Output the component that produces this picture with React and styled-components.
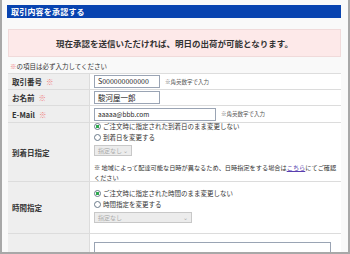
import styled, { createGlobalStyle } from "styled-components";

const Global = createGlobalStyle`
  html, body { margin: 0; padding: 0; }
  body {
    width: 350px;
    height: 254px;
    overflow: hidden;
    font-family: "Noto Sans CJK JP", "Noto Sans", sans-serif;
    color: #333;
  }
`;

const Frame = styled.div`
  box-sizing: border-box;
  width: 350px;
  height: 254px;
  overflow: hidden;
  border: 2px solid #a8a8a8;
  border-top: none;
  background: #f9f9f9;
  padding: 5px 7px 0 5px;
`;

const Header = styled.div`
  height: 13px;
  background: #0843b0;
  color: #fff;
  font-size: 8px;
  font-weight: 700;
  line-height: 13px;
  padding-left: 4px;
  letter-spacing: 0.2px;
`;

const Notice = styled.div`
  margin: 11px 0 0 1px;
  height: 26px;
  background: #fde9e9;
  border: 1px solid #f0dada;
  display: flex;
  align-items: center;
  justify-content: center;
  font-size: 8.5px;
  font-weight: 700;
  color: #333;
`;

const Required = styled.p`
  margin: 4px 0 0 3px;
  font-size: 6.5px;
  line-height: 10px;
`;

const Mark = styled.span`
  color: #f08080;
  margin-left: ${(p) => (p.$gap ? "4px" : "0")};
`;

const Table = styled.div`
  margin: 2px 0 0 1px;
  display: grid;
  grid-template-columns: 82px 1fr;
  border-top: 1px solid #ddd;
  background: #fff;
`;

const Label = styled.div`
  background: #eeeeee;
  border-bottom: 1px solid #dcdcdc;
  border-right: 1px solid #dcdcdc;
  display: flex;
  align-items: center;
  padding-left: 4px;
  height: ${(p) => p.$h}px;
  font-size: 7.5px;
  font-weight: 700;
  color: #333;
  box-sizing: border-box;
`;

const Cell = styled.div`
  border-bottom: 1px solid #dcdcdc;
  display: flex;
  flex-direction: ${(p) => (p.$col ? "column" : "row")};
  align-items: ${(p) => (p.$col ? "flex-start" : "center")};
  justify-content: ${(p) => (p.$col ? "center" : "flex-start")};
  padding-left: 4px;
  height: ${(p) => p.$h}px;
  box-sizing: border-box;
`;

const Input = styled.div`
  box-sizing: border-box;
  width: ${(p) => p.$w}px;
  height: 13px;
  border: 1px solid #9aa4b4;
  background: #fff;
  font-size: ${(p) => p.$fs || 7}px;
  line-height: 11px;
  padding-left: 3px;
  color: #222;
  white-space: nowrap;
  overflow: hidden;
`;

const Hint = styled.span`
  font-size: 5.5px;
  color: #555;
  margin-left: 5px;
`;

const Radio = styled.label`
  display: flex;
  align-items: center;
  font-size: 6.5px;
  line-height: 11px;
  color: #333;
  &::before {
    content: "";
    box-sizing: border-box;
    width: 7px;
    height: 7px;
    border-radius: 50%;
    border: 1px solid #6a7a8a;
    margin-right: 2px;
    background: ${(p) =>
      p.$on ? "radial-gradient(circle, #2fa84f 0 1.6px, #fff 2px)" : "#fff"};
  }
`;

const Select = styled.div`
  box-sizing: border-box;
  width: ${(p) => p.$w}px;
  height: 11px;
  margin: 2px 0 4px;
  border: 1px solid #c8c8c8;
  background: #ececec;
  color: #aaa;
  font-size: 6px;
  display: flex;
  align-items: center;
  justify-content: space-between;
  padding: 0 3px;
`;

const Note = styled.p`
  margin: 3px 0 0;
  font-size: 6.2px;
  line-height: 10px;
  color: #333;
  padding-right: 3px;
`;

const A = styled.span`
  color: #5a3fb0;
  text-decoration: underline;
`;

const Textarea = styled.div`
  box-sizing: border-box;
  width: 237px;
  height: 30px;
  margin-top: 6px;
  align-self: flex-start;
  border: 1px solid #9aa4b4;
  background: #fff;
`;

export default function App() {
  return (
    <>
      <Global />
      <Frame>
        <Header>取引内容を承認する</Header>
        <Notice>現在承認を送信いただければ、明日の出荷が可能となります。</Notice>
        <Required>
          <Mark>※</Mark>の項目は必ず入力してください
        </Required>
        <Table>
          <Label $h={16}>
            取引番号<Mark $gap>※</Mark>
          </Label>
          <Cell $h={16}>
            <Input $w={66}>S000000000000</Input>
            <Hint>※角英数字で入力</Hint>
          </Cell>
          <Label $h={16}>
            お名前<Mark $gap>※</Mark>
          </Label>
          <Cell $h={16}>
            <Input $w={66} $fs={7.5}>駿河屋一郎</Input>
          </Cell>
          <Label $h={17}>
            E-Mail<Mark $gap>※</Mark>
          </Label>
          <Cell $h={17}>
            <Input $w={122} $fs={6.5}>aaaaa@bbb.com</Input>
            <Hint>※角英数字で入力</Hint>
          </Cell>
          <Label $h={59}>到着日指定</Label>
          <Cell $h={59} $col>
            <Radio $on>ご注文時に指定された到着日のまま変更しない</Radio>
            <Radio>到着日を変更する</Radio>
            <Select $w={38}>
              指定なし<span>⌄</span>
            </Select>
            <Note>
              ※ 地域によって配達可能な日時が異なるため、日時指定をする場合は<A>こちら</A>にてご確認ください
            </Note>
          </Cell>
          <Label $h={52}>時間指定</Label>
          <Cell $h={52} $col>
            <Radio $on>ご注文時に指定された時間のまま変更しない</Radio>
            <Radio>時間指定を変更する</Radio>
            <Select $w={98}>
              指定なし<span>⌄</span>
            </Select>
          </Cell>
          <Label $h={40} />
          <Cell $h={40} $col>
            <Textarea />
          </Cell>
        </Table>
      </Frame>
    </>
  );
}
